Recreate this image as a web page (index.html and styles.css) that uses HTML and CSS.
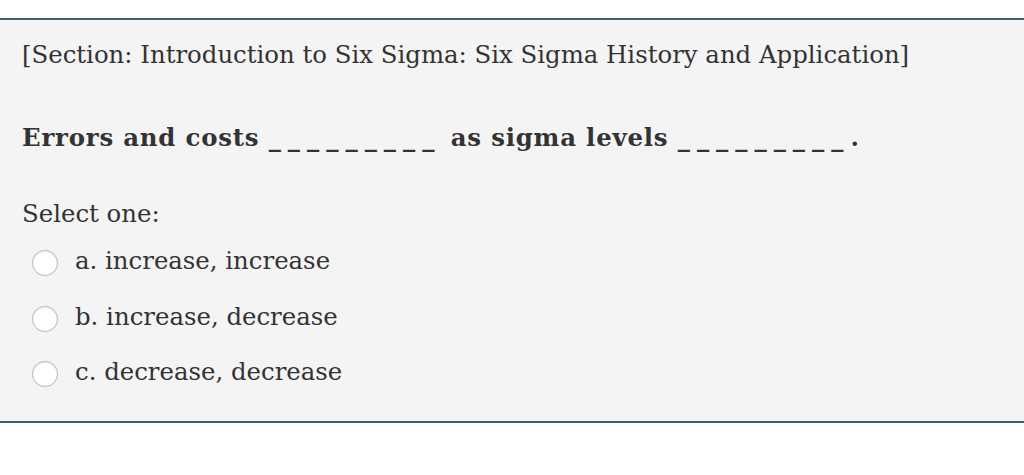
FILE: index.html
```html
<!DOCTYPE html>
<html>
<head>
<meta charset="utf-8">
<link rel="stylesheet" href="styles.css">
</head>
<body>
<div class="page">
  <div class="que">
    <p class="section">[Section: Introduction to Six Sigma: Six Sigma History and Application]</p>
    <p class="qtext">Errors and costs <span class="blank">_________</span> as sigma levels <span class="blank">_________</span>.</p>
    <p class="prompt">Select one:</p>
    <div class="answers">
      <label class="opt"><span class="radio"></span><span class="lbl">a. increase, increase</span></label>
      <label class="opt"><span class="radio"></span><span class="lbl">b. increase, decrease</span></label>
      <label class="opt"><span class="radio"></span><span class="lbl">c. decrease, decrease</span></label>
    </div>
  </div>
</div>
</body>
</html>
```
FILE: styles.css
```css
html, body {
  margin: 0;
  padding: 0;
  background: #ffffff;
}
.page {
  padding-top: 18px;
}
.que {
  background: #f4f4f4;
  border-top: 2px solid #3f5d78;
  border-bottom: 2px solid #3f5d78;
  box-shadow: 0 1px 0 #a9bccb;
  padding: 0 22px;
  height: 405px;
  box-sizing: border-box;
  font-family: "DejaVu Serif", "Liberation Serif", serif;
  font-size: 24.4px;
  color: #333333;
}
.section {
  margin: 0;
  padding-top: 20px;
  line-height: 30px;
}
.qtext {
  margin: 0;
  padding-top: 53px;
  line-height: 30px;
  font-weight: bold;
  letter-spacing: 0.8px;
}
.blank {
  letter-spacing: 7px;
}
.prompt {
  margin: 0;
  padding-top: 46px;
  line-height: 30px;
}
.answers {
  display: flex;
  flex-direction: column;
  padding-top: 17px;
  gap: 25.5px;
}
.opt {
  display: flex;
  align-items: flex-start;
  height: 30px;
}
.lbl {
  line-height: 30px;
}
.radio {
  width: 24px;
  height: 24px;
  border-radius: 50%;
  border: 1px solid #bdbdbd;
  background: #ffffff;
  box-shadow: inset 0 1px 2px rgba(0,0,0,0.08), 0 0 1px rgba(0,0,0,0.1);
  margin-top: 4px;
  margin-left: 10px;
  margin-right: 17px;
  flex: none;
}
```
